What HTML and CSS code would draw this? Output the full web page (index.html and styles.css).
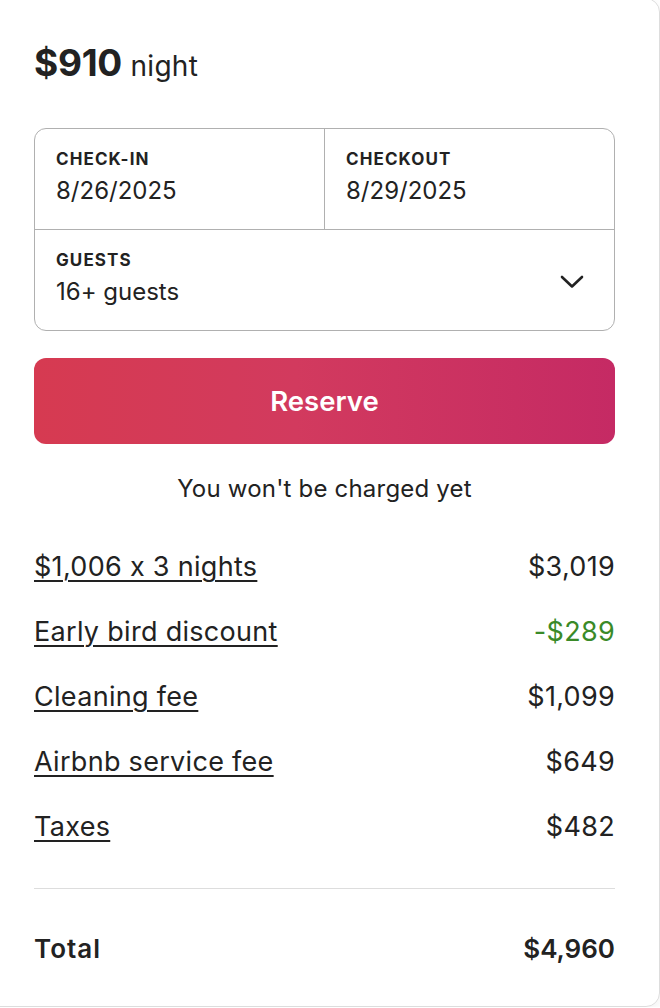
FILE: index.html
```html
<!DOCTYPE html>
<html lang="en">
<head>
<meta charset="utf-8">
<title>Booking</title>
<link rel="stylesheet" href="styles.css">
</head>
<body>
<div class="card">
  <div class="price-line"><span class="price">$910</span> <span class="per">night</span></div>

  <div class="booking">
    <div class="dates">
      <div class="cell">
        <div class="label">CHECK-IN</div>
        <div class="value">8/26/2025</div>
      </div>
      <div class="cell cell-right">
        <div class="label">CHECKOUT</div>
        <div class="value">8/29/2025</div>
      </div>
    </div>
    <div class="cell guests">
      <div>
        <div class="label">GUESTS</div>
        <div class="value">16+ guests</div>
      </div>
      <svg class="chev" width="24" height="14" viewBox="0 0 24 14" aria-hidden="true"><path d="M2 2 L12 11.5 L22 2" fill="none" stroke="#222" stroke-width="2.6" stroke-linecap="round" stroke-linejoin="round"/></svg>
    </div>
  </div>

  <button class="reserve">Reserve</button>
  <div class="note">You won't be charged yet</div>

  <div class="rows">
    <div class="row"><span class="link">$1,006 x 3 nights</span><span>$3,019</span></div>
    <div class="row"><span class="link">Early bird discount</span><span class="green">-$289</span></div>
    <div class="row"><span class="link">Cleaning fee</span><span>$1,099</span></div>
    <div class="row"><span class="link">Airbnb service fee</span><span>$649</span></div>
    <div class="row"><span class="link">Taxes</span><span>$482</span></div>
  </div>

  <div class="divider"></div>

  <div class="row total"><span class="total-label">Total</span><span>$4,960</span></div>
</div>
</body>
</html>
```

FILE: styles.css
```css
* { box-sizing: border-box; }
html, body { margin: 0; padding: 0; background: #fff; overflow: hidden; }
body {
  font-family: Inter, "Noto Sans", "Liberation Sans", sans-serif;
  font-feature-settings: "calt" 0;
  color: #222;
}
.card {
  width: 680px;
  height: 1009px;
  margin: -2px 0 0 -20px;
  padding: 44px 44px 0 53px;
  border: 1px solid #dddddd;
  border-radius: 14px;
  box-shadow: 0 4px 14px rgba(0,0,0,0.06);
  background: #fff;
}
.price-line {
  height: 40px;
  line-height: 40px;
  white-space: nowrap;
}
.price {
  font-size: 37px;
  font-weight: 700;
  letter-spacing: -0.3px;
}
.per {
  margin-left: 4px;
  font-size: 28px;
  font-weight: 400;
  letter-spacing: 0.3px;
}
.booking {
  margin-top: 45px;
  border: 1px solid #b0b0b0;
  border-radius: 12px;
}
.dates {
  display: flex;
  border-bottom: 1px solid #b0b0b0;
}
.cell {
  height: 100px;
  padding: 20px 21px 0 21px;
  flex: 1;
}
.cell-right {
  border-left: 1px solid #b0b0b0;
  padding-left: 21px;
}
.label {
  font-size: 17px;
  font-weight: 700;
  line-height: 20px;
  letter-spacing: 1.1px;
}
.value {
  margin-top: 7px;
  font-size: 24px;
  line-height: 30px;
}
.guests {
  height: 100px;
  display: flex;
  justify-content: space-between;
  align-items: flex-start;
  padding-right: 30px;
}
.chev { margin-top: 25px; }
.reserve {
  display: block;
  width: 100%;
  height: 86px;
  margin-top: 27px;
  border: none;
  border-radius: 12px;
  background: linear-gradient(to right, #d63a51 0%, #d23a5e 45%, #c52a64 100%);
  color: #fff;
  font-family: inherit;
  font-size: 27.5px;
  font-weight: 600;
  cursor: pointer;
}
.note {
  margin-top: 30px;
  text-align: center;
  font-size: 24px;
  letter-spacing: 0.2px;
  line-height: 30px;
}
.rows {
  margin-top: 48px;
  display: flex;
  flex-direction: column;
  gap: 35px;
}
.row {
  display: flex;
  justify-content: space-between;
  font-size: 27px;
  letter-spacing: 0.3px;
  line-height: 30px;
}
.link {
  text-decoration: underline;
  text-decoration-thickness: 1.5px;
  text-underline-offset: 4px;
}
.green { color: #3a8a28; }
.divider {
  margin-top: 46px;
  height: 1px;
  background: #dddddd;
}
.total {
  margin-top: 45px;
  font-weight: 600;
  font-size: 26px;
  letter-spacing: 0;
}
.total-label { letter-spacing: 1px; }
```
